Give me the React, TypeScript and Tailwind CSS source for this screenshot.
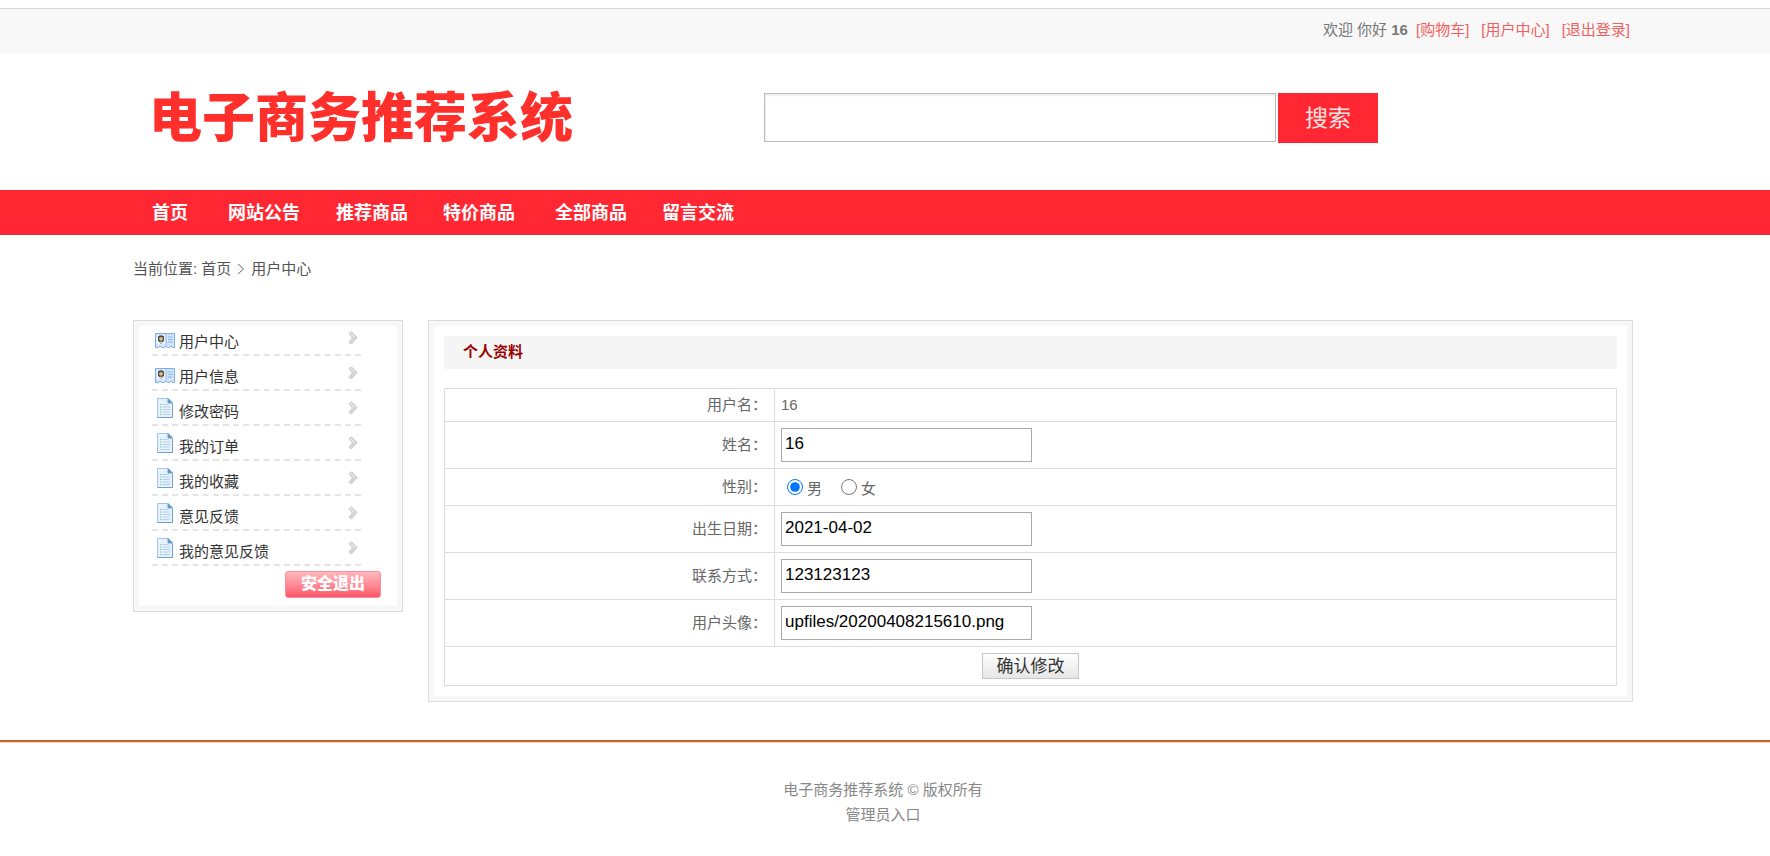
import React, { useState } from "react";

const navItems = [
  { name: "首页", gap: "mr-10" },
  { name: "网站公告", gap: "mr-9" },
  { name: "推荐商品", gap: "mr-[35px]" },
  { name: "特价商品", gap: "mr-10" },
  { name: "全部商品", gap: "mr-[35px]" },
  { name: "留言交流", gap: "" },
];

const menuItems = [
  { name: "用户中心", icon: "card" },
  { name: "用户信息", icon: "card" },
  { name: "修改密码", icon: "doc" },
  { name: "我的订单", icon: "doc" },
  { name: "我的收藏", icon: "doc" },
  { name: "意见反馈", icon: "doc" },
  { name: "我的意见反馈", icon: "doc" },
];

function CardIcon() {
  return (
    <svg width="20" height="15" viewBox="0 0 20 15" className="shrink-0">
      <path d="M.5.5h19v14h-2l-1.500-1.500-1.500 1.500h-2L11 13l-1.500 1.500h-3L5 13l-1.500 1.500h-3z" fill="#cfe3f9" stroke="#7faee2" />
      <path d="M11 1v11.500" stroke="#9cc0ea" />
      <rect x="2" y="2" width="8" height="9.500" fill="#eef6ff" />
      <path d="M3 3.500Q6 .8 9 3.500V7.500L6 11 3 7.500z" fill="#4a4a4a" />
      <circle cx="6" cy="5.800" r="1.900" fill="#e6bf83" />
      <path d="M5 9.300 6 8.200 7 9.300 6 10.700z" fill="#f5f5f5" />
      <path d="M13 4h4.500M13 6.500h4.500M13 9h4.500" stroke="#8db8ea" />
    </svg>
  );
}

function DocIcon() {
  return (
    <svg width="16" height="20" viewBox="0 0 16 20" className="shrink-0">
      <path d="M.5.5h10.500l4.500 4.500v14.500H.5z" fill="#e6f2fd" stroke="#a3c6e8" />
      <path d="M.5 19.500h15V6" fill="none" stroke="#6f9fd0" />
      <path d="M11 .5V5h4.500z" fill="#5f8fc4" stroke="#6f9fd0" />
      <path d="M5.500 6.500h6M5.500 9H13M5.500 11.500H13M5.500 14H13M5.500 16.500H13" stroke="#b3d0ee" />
      <path d="M3 6.500h1.500M3 9h1.500M3 11.500h1.500M3 14h1.500M3 16.500h1.500" stroke="#86c79a" />
    </svg>
  );
}

function ArrowIcon() {
  return (
    <svg width="10" height="14" viewBox="0 0 10 14" className="shrink-0">
      <path d="M1 2.500 3.500.8 9.300 6.500 3.500 13 .8 11.200 4.300 7z" fill="#d6d6d6" stroke="#c6c6c6" strokeWidth=".7" />
      <path d="M2.500 2.300 6.500 6.300" stroke="#f4f4f4" />
    </svg>
  );
}

function Container({ children }: { children: React.ReactNode }) {
  return (
    <div className="pr-1">
      <div className="mx-auto max-w-[1500px]">{children}</div>
    </div>
  );
}

export default function App() {
  const [formData, setFormData] = useState({
    xingming: "16",
    xingbie: "男",
    shengri: "2021-04-02",
    dianhua: "123123123",
    touxiang: "upfiles/20200408215610.png",
  });

  const handleChange = (e: React.ChangeEvent<HTMLInputElement>) => {
    const { name, value } = e.target;
    setFormData((prev) => ({ ...prev, [name]: value }));
  };

  const labelCell = "border border-[#dcdcdc] pr-[7px] text-right";
  const valueCell = "border border-[#dcdcdc] px-1.5";
  const inputClass =
    "block h-[34px] w-[251px] border border-[#a9a9a9] bg-white pl-[3px] pb-0.5 text-[17px] text-black outline-none";

  return (
    <div className="bg-white pt-2 font-['Liberation_Sans','Noto_Sans_CJK_SC',sans-serif] text-[15px] leading-[22px] text-[#666]">
      <div className="h-[45px] border-t border-[#d9d9d9] bg-[#f8f8f8]">
        <Container>
          <div className="flex justify-end pt-2.5 pr-[3px] text-[#777]">
            <span className="mr-2">
              欢迎 你好 <b>16</b>
            </span>
            <div className="flex gap-3 text-[#f0605f]">
              <a href="#cart">[购物车]</a>
              <a href="#center">[用户中心]</a>
              <a href="#logout">[退出登录]</a>
            </div>
          </div>
        </Container>
      </div>

      <Container>
        <div className="flex h-[137px] items-start">
          <h1 className="w-[631px] shrink-0 pt-[30px] pl-4 text-[53px] leading-[72px] font-black whitespace-nowrap text-[#ff302c]">
            电子商务推荐系统
          </h1>
          <form className="flex gap-0.5 pt-10" onSubmit={(e) => e.preventDefault()}>
            <input
              type="text"
              aria-label="搜索商品"
              className="h-[49px] w-[512px] border border-[#bbb] bg-white px-2 text-base shadow-[inset_1px_2px_2px_#eee] outline-none"
            />
            <button type="submit" className="h-[50px] w-[100px] bg-[#ff2832] text-[23px] text-[#ffe3e3]">
              搜索
            </button>
          </form>
        </div>
      </Container>

      <nav className="bg-[#ff2832]">
        <Container>
          <div className="flex h-[45px] items-center pl-[19px] text-lg font-bold text-white">
            {navItems.map((item) => (
              <a key={item.name} href="#nav" className={item.gap}>
                {item.name}
              </a>
            ))}
          </div>
        </Container>
      </nav>

      <Container>
        <div className="flex items-center pt-[23px] text-[#555]">
          <span className="mr-1">当前位置:</span>
          <a href="#home">首页</a>
          <svg width="8" height="12" viewBox="0 0 8 12" className="mx-1.5">
            <path d="M1 1l5.500 5L1 11" fill="none" stroke="#666" />
          </svg>
          <span>用户中心</span>
        </div>

        <div className="flex items-start gap-[25px] pt-10">
          <div className="w-[270px] shrink-0 border border-[#dcdcdc] bg-[#f7f7f7] p-[5px]">
            <div className="bg-white pb-2">
              <ul className="mr-9 ml-[13px] text-[#333]">
                {menuItems.map((item, i) => (
                  <li
                    key={item.name}
                    className={
                      i === 0
                        ? "h-[30px] border-b-2 border-dashed border-[#e4e4e4]"
                        : "h-[35px] border-b-2 border-dashed border-[#e4e4e4] pt-[5px]"
                    }
                  >
                    <a href="#menu" className="flex">
                      <span className={item.icon === "card" ? "flex w-[27px] pt-[7px] pl-[3px]" : "flex w-[27px] pt-0.5 pl-[5px]"}>
                        {item.icon === "card" ? <CardIcon /> : <DocIcon />}
                      </span>
                      <span className="flex-1 pt-[5px]">{item.name}</span>
                      <span className="pt-[5px] pr-[3px]">
                        <ArrowIcon />
                      </span>
                    </a>
                  </li>
                ))}
              </ul>
              <div className="flex justify-end pt-[5px] pr-4">
                <button
                  type="button"
                  className="h-[27px] w-24 rounded-[3px] border border-[#f98d98] bg-linear-to-b from-[#ffb9bd] via-[#ff8c98] to-[#fb5468] pb-0.5 text-base leading-[22px] font-black text-white"
                >
                  安全退出
                </button>
              </div>
            </div>
          </div>

          <div className="min-w-0 flex-1 border border-[#dcdcdc] bg-[#f7f7f7] p-[5px]">
            <div className="bg-white p-2.5">
              <h2 className="h-[33px] bg-[#f5f5f5] pl-[19px] leading-8 font-bold text-[#900]">个人资料</h2>
              <form onSubmit={(e) => e.preventDefault()}>
                <table className="mt-[19px] w-full table-fixed border-collapse">
                  <colgroup>
                    <col className="w-[330px]" />
                    <col />
                  </colgroup>
                  <tbody>
                    <tr className="h-[33px]">
                      <td className={labelCell}>用户名：</td>
                      <td className={valueCell}>16</td>
                    </tr>
                    <tr className="h-[47px]">
                      <td className={labelCell}>
                        <label htmlFor="xingming">姓名：</label>
                      </td>
                      <td className={valueCell}>
                        <input id="xingming" name="xingming" value={formData.xingming} onChange={handleChange} className={inputClass} />
                      </td>
                    </tr>
                    <tr className="h-[37px]">
                      <td className={labelCell}>性别：</td>
                      <td className={valueCell}>
                        <div className="flex items-center pl-1.5">
                          <label className="mr-[19px] flex items-center gap-1">
                            <input type="radio" name="xingbie" value="男" checked={formData.xingbie === "男"} onChange={handleChange} className="size-4" />
                            <span className="pt-1">男</span>
                          </label>
                          <label className="flex items-center gap-1">
                            <input type="radio" name="xingbie" value="女" checked={formData.xingbie === "女"} onChange={handleChange} className="size-4" />
                            <span className="pt-1">女</span>
                          </label>
                        </div>
                      </td>
                    </tr>
                    <tr className="h-[47px]">
                      <td className={labelCell}>
                        <label htmlFor="shengri">出生日期：</label>
                      </td>
                      <td className={valueCell}>
                        <input id="shengri" name="shengri" value={formData.shengri} onChange={handleChange} className={inputClass} />
                      </td>
                    </tr>
                    <tr className="h-[47px]">
                      <td className={labelCell}>
                        <label htmlFor="dianhua">联系方式：</label>
                      </td>
                      <td className={valueCell}>
                        <input id="dianhua" name="dianhua" value={formData.dianhua} onChange={handleChange} className={inputClass} />
                      </td>
                    </tr>
                    <tr className="h-[47px]">
                      <td className={labelCell}>
                        <label htmlFor="touxiang">用户头像：</label>
                      </td>
                      <td className={valueCell}>
                        <input id="touxiang" name="touxiang" value={formData.touxiang} onChange={handleChange} className={inputClass} />
                      </td>
                    </tr>
                    <tr className="h-[39px]">
                      <td colSpan={2} className="border border-[#dcdcdc] text-center">
                        <button
                          type="submit"
                          className="mx-auto block h-[26px] w-[97px] border border-[#c6c6c6] bg-linear-to-b from-white to-[#e6e6e6] pt-0.5 text-[17px] leading-[22px] text-[#333]"
                        >
                          确认修改
                        </button>
                      </td>
                    </tr>
                  </tbody>
                </table>
              </form>
            </div>
          </div>
        </div>
      </Container>

      <footer className="mt-[38px] border-t-2 border-[#c4622d] pt-[35px] text-center leading-[25px] text-[#888] shadow-[inset_0_1px_0_#fbdcc4]">
        <div className="pr-1">
          <p>电子商务推荐系统 © 版权所有</p>
          <a href="#admin">管理员入口</a>
        </div>
      </footer>
    </div>
  );
}
